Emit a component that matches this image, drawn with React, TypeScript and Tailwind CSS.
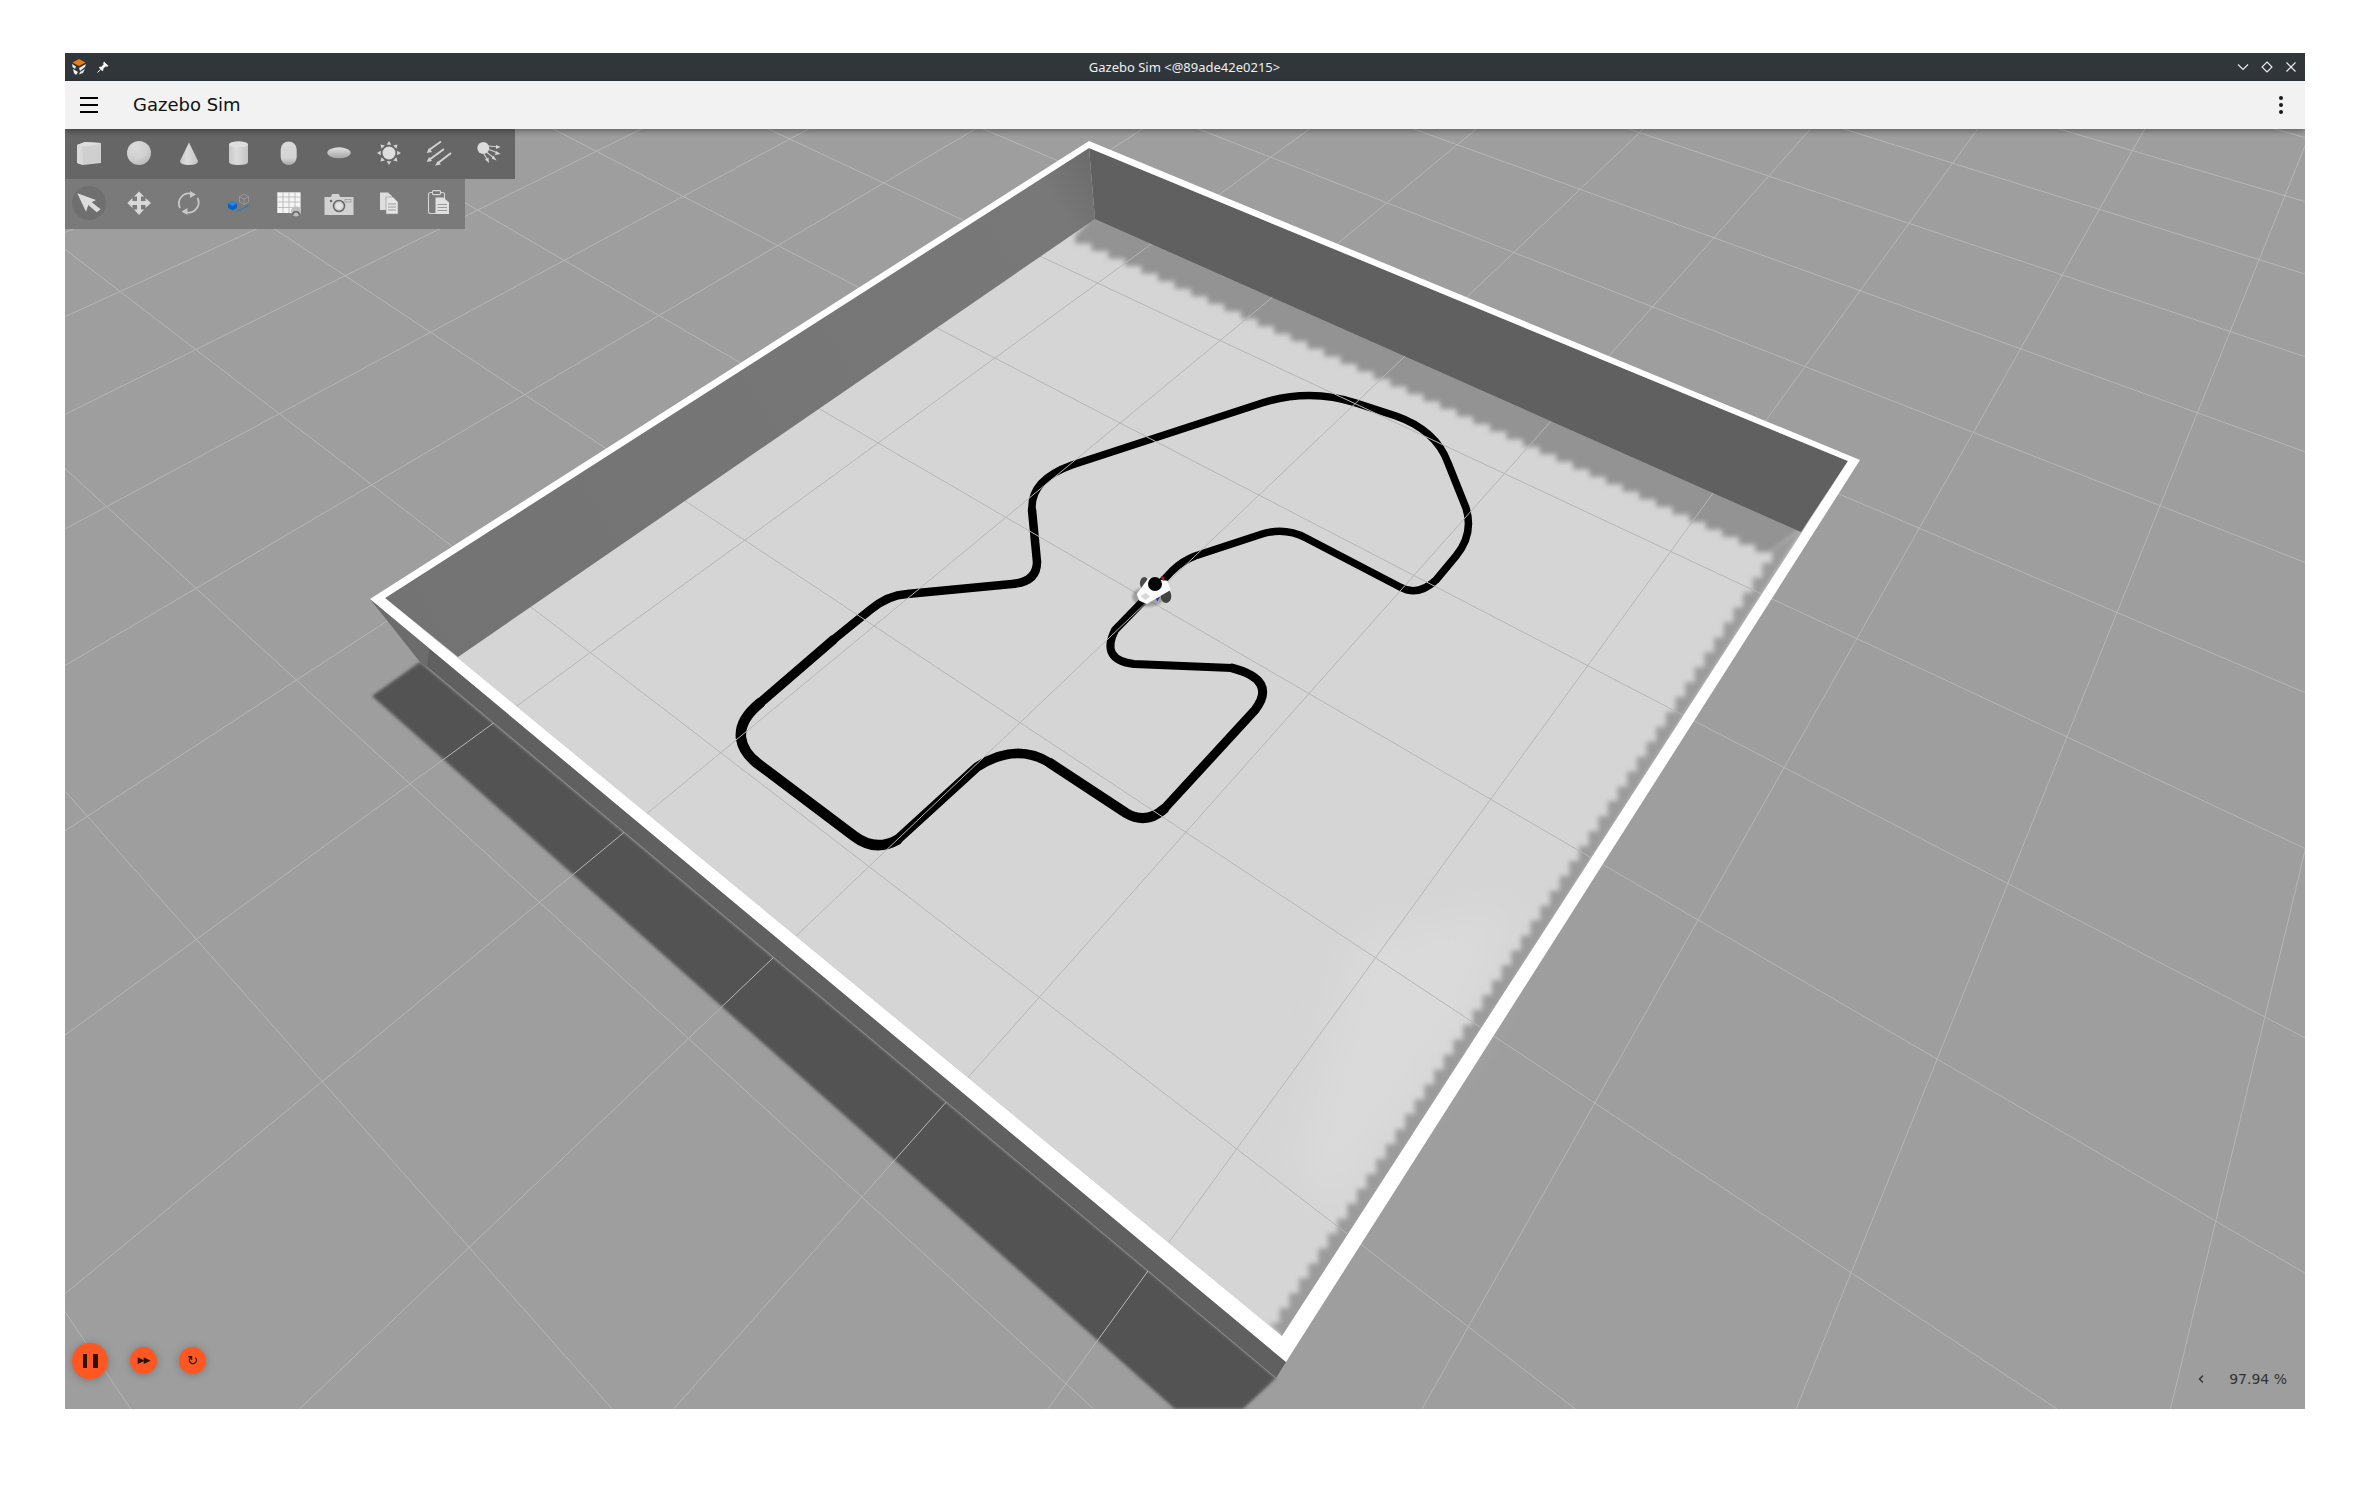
import { ChevronLeft } from "lucide-react"
import type { ReactNode } from "react"

// floor square -> screen, unit square corners taken off the picture
const H = { a: 435.1, b: 1064.2, c: 458, d: 273.7, e: -352.6, f: 657, g: -0.30334, h: 0.39013 }
const project = (u: number, v: number) => {
  const w = H.g * u + H.h * v + 1
  return [(H.a * u + H.b * v + H.c) / w, (H.d * u + H.e * v + H.f) / w]
}

const gridLines: number[][] = []
for (let k = -9; k <= 9; k++) {
  const u = 0.1 + 0.2 * k
  gridLines.push([...project(u, -0.8), ...project(u, 2.6)])
}
for (let k = -4; k <= 13; k++) {
  const v = 0.085 + 0.2 * k
  gridLines.push([...project(-1.7, v), ...project(1.8, v)])
}

// stepped edge of the shadow maps
const stairs = (x0: number, y0: number, x1: number, y1: number, n: number) => {
  const pts: string[] = []
  for (let i = 0; i < n; i++) {
    const ax = x0 + ((x1 - x0) * i) / n
    const ay = y0 + ((y1 - y0) * i) / n
    const bx = x0 + ((x1 - x0) * (i + 1)) / n
    const by = y0 + ((y1 - y0) * (i + 1)) / n
    pts.push(`${ax},${ay}`, `${bx},${ay}`, `${bx},${by}`)
  }
  return pts.join(" ")
}

// the tape gets wider towards the camera, so it is cut in sections
const TRACK = [
  {
    w: 7.5,
    d: "M1152 592 L1172 571 Q1182 561 1195 556 L1262 534 Q1285 527 1306 538 L1400 587 Q1418 597 1436 580 L1456 556 Q1474 534 1466 508 L1448 463 Q1436 430 1396 416 L1356 403 Q1310 388 1262 403 L1072 465 Q1030 480 1032 510",
  },
  { w: 8.5, d: "M1032 510 L1037 562 Q1037 582 1012 584 L907 594 Q888 595 870 610 L833 640" },
  { w: 9.5, d: "M833 640 L760 703" },
  { w: 10.5, d: "M760 703 Q739 720 741 738 Q743 752 757 763 L854 836 Q875 852 897 840" },
  { w: 9.5, d: "M897 840 L977 767 Q1016 742 1050 763" },
  { w: 10, d: "M1050 763 L1126 813 Q1146 825 1164 809" },
  { w: 9, d: "M1164 809 L1255 710 Q1278 680 1232 668" },
  { w: 8, d: "M1232 668 L1134 664 Q1100 660 1115 630 L1152 592" },
]

function Scene() {
  return (
    <svg className="absolute inset-0 w-full h-full" viewBox="65 129 2240 1280">
      <defs>
        <filter id="soft" x="-5%" y="-5%" width="110%" height="110%">
          <feGaussianBlur stdDeviation="1.4" />
        </filter>
        <filter id="softer" x="-5%" y="-5%" width="110%" height="110%">
          <feGaussianBlur stdDeviation="2.4" />
        </filter>
        <filter id="patch" x="-30%" y="-30%" width="160%" height="160%">
          <feGaussianBlur stdDeviation="18" />
        </filter>
        <filter id="robotShadow" x="-50%" y="-50%" width="200%" height="200%">
          <feGaussianBlur stdDeviation="3" />
        </filter>
        <linearGradient id="leftWall" gradientUnits="userSpaceOnUse" x1="1089" y1="148" x2="385" y2="598">
          <stop offset="0" stopColor="#6b6b6b" />
          <stop offset="0.07" stopColor="#787878" />
          <stop offset="1" stopColor="#737373" />
        </linearGradient>
      </defs>
      <rect x="65" y="129" width="2240" height="1280" fill="#9e9e9e" />

      <polygon points="372,696 420,662 1276,1378 1243,1409 1175,1409" fill="#525252" filter="url(#soft)" />
      <polygon points="1089,148 1848,461 1282,1336 385,598" fill="#d5d5d5" />
      <polygon points="1512,907 1474,1013 1330,1209 1300,1164 1360,937" fill="#dadada" filter="url(#patch)" />
      <polygon
        points={`1095,214 1806,526 ${stairs(1772, 552, 1075, 236, 42)}`}
        fill="#939393"
        filter="url(#softer)"
      />
      <polygon
        points={`1806,526 1284,1340 ${stairs(1270, 1323, 1772, 548, 52)}`}
        fill="#9b9b9b"
        filter="url(#softer)"
      />
      {TRACK.map((t) => (
        <path key={t.d} d={t.d} fill="none" stroke="#000" strokeWidth={t.w} strokeLinecap="round" strokeLinejoin="round" />
      ))}

      {gridLines.map((l, i) => (
        <line key={i} x1={l[0]} y1={l[1]} x2={l[2]} y2={l[3]} stroke="#b6b6b6" strokeWidth="1" />
      ))}

      <polygon points="1089,148 1848,461 1801,532 1095,219" fill="#606060" />
      <polygon points="1089,148 385,598 458,657 1095,219" fill="url(#leftWall)" />
      <polygon points="370,599 1286,1362 1276,1378 427,667" fill="#606060" />
      <polygon points="370,599 420,662 427,667 430,640" fill="#6c6c6c" />
      <line x1="427" y1="667" x2="1276" y2="1378" stroke="#8a8a8a" strokeWidth="1" />
      <polygon
        fillRule="evenodd"
        points="1089,141 1860,460 1286,1362 370,599 1089,141 1089,148 385,598 1282,1336 1848,461 1089,148"
        fill="#fff"
      />

      <g transform="translate(1080 540) scale(0.3333)">
        <ellipse cx="205" cy="170" rx="48" ry="30" fill="#000" opacity="0.25" filter="url(#robotShadow)" />
        <ellipse cx="193" cy="130" rx="13" ry="19" fill="#4a4a4a" />
        <ellipse cx="258" cy="168" rx="16" ry="21" fill="#444" />
        <polygon points="170,162 205,115 262,122 272,150 200,192 178,182" fill="#fbfbfb" />
        <polygon points="228,176 240,170 232,184" fill="#2230a0" />
        <circle cx="225" cy="132" r="21" fill="#050505" />
        <polygon points="244,108 254,112 252,122 244,118" fill="#c01818" />
        <polygon points="182,168 198,158 210,170 196,180" fill="#d8d8d8" />
      </g>
    </svg>
  )
}

function Slot({ children, active }: { children: ReactNode; active?: boolean }) {
  return (
    <div className="w-[50px] h-[50px] flex items-center justify-center relative">
      {active && <div className="absolute left-[7px] top-[7px] w-[34px] h-[34px] rounded-full bg-[#6f6f6f]" />}
      <svg viewBox="0 0 30 30" className="w-[30px] h-[30px] relative mr-[2px] mb-[2px]">
        {children}
      </svg>
    </div>
  )
}

function ShapeDefs() {
  return (
    <svg className="absolute w-0 h-0">
      <defs>
        <radialGradient id="ball" cx="0.35" cy="0.25" r="0.85">
          <stop offset="0" stopColor="#dcdcdc" />
          <stop offset="0.6" stopColor="#cfcfcf" />
          <stop offset="1" stopColor="#b5b5b5" />
        </radialGradient>
        <linearGradient id="cyl" x1="0" x2="1" y1="0" y2="0">
          <stop offset="0" stopColor="#c8c8c8" />
          <stop offset="0.4" stopColor="#dcdcdc" />
          <stop offset="1" stopColor="#c4c4c4" />
        </linearGradient>
        <linearGradient id="capsule" x1="0" x2="0" y1="0" y2="1">
          <stop offset="0" stopColor="#dadada" />
          <stop offset="0.7" stopColor="#d4d4d4" />
          <stop offset="1" stopColor="#a8a8a8" />
        </linearGradient>
        <linearGradient id="oval" x1="0" x2="0" y1="0" y2="1">
          <stop offset="0" stopColor="#e2e2e2" />
          <stop offset="1" stopColor="#a4a4a4" />
        </linearGradient>
      </defs>
    </svg>
  )
}

const RAYS = [0, 45, 90, 135, 180, 225, 270, 315]

function ShapesBar() {
  return (
    <div className="absolute left-0 top-0 h-[50px] w-[450px] flex bg-[#666666]">
      <Slot>
        <polygon points="3,7 11,4 27,5 27,25 9,27 3,25" fill="#cfcfcf" />
        <polygon points="3,7 11,4 27,5 20,7.5 8,8.5" fill="#dedede" />
        <polygon points="3,7 8,8.5 9,27 3,25" fill="#d9d9d9" />
      </Slot>
      <Slot>
        <circle cx="15" cy="15" r="12" fill="url(#ball)" />
      </Slot>
      <Slot>
        <path d="M15 4.5 L24 23 Q24 27 15 27 Q6 27 6 23 Z" fill="url(#cyl)" />
      </Slot>
      <Slot>
        <path d="M5 6.5 Q5 3.5 14.5 3.5 Q24 3.5 24 6.5 V24 Q24 27 14.5 27 Q5 27 5 24 Z" fill="url(#cyl)" />
        <ellipse cx="14.5" cy="6.5" rx="9.5" ry="3" fill="#dedede" />
      </Slot>
      <Slot>
        <rect x="6.7" y="3.5" width="16" height="23.5" rx="8" fill="url(#capsule)" />
      </Slot>
      <Slot>
        <ellipse cx="15" cy="14.8" rx="11.7" ry="5.5" fill="url(#oval)" />
      </Slot>
      <Slot>
        <circle cx="15" cy="15" r="6.5" fill="#dedede" />
        {RAYS.map((r) => (
          <polygon key={r} points="15,3 17.3,6.8 12.7,6.8" fill="#d4d4d4" transform={`rotate(${r} 15 15)`} />
        ))}
      </Slot>
      <Slot>
        <g stroke="#d2d2d2" strokeWidth="2" fill="#d2d2d2">
          <line x1="17" y1="3.5" x2="5" y2="12" />
          <line x1="20" y1="11" x2="5" y2="22" />
          <line x1="27" y1="15" x2="14" y2="25" />
        </g>
        <polygon points="2.7,15 8,14 5,10" fill="#d2d2d2" />
        <polygon points="2.7,24 8,23 5,19" fill="#d2d2d2" />
        <polygon points="11,27.5 17,26.5 14,23" fill="#d2d2d2" />
      </Slot>
      <Slot>
        <circle cx="9.3" cy="10" r="6" fill="#dcdcdc" />
        <g stroke="#cfcfcf" strokeWidth="1.2">
          <line x1="15" y1="8" x2="24" y2="9" />
          <line x1="15" y1="11.5" x2="24" y2="15" />
          <line x1="13" y1="14.5" x2="20" y2="20" />
          <line x1="10" y1="16" x2="13.5" y2="22" />
        </g>
        <polygon points="26.7,9 22,7 22,11" fill="#d4d4d4" />
        <polygon points="26.7,16 22,13 21,17" fill="#d4d4d4" />
        <polygon points="22.5,22.5 19.5,17.5 17.5,20.5" fill="#d4d4d4" />
        <polygon points="15,25 14.5,19.5 11,21.5" fill="#d4d4d4" />
      </Slot>
    </div>
  )
}

function ToolsBar() {
  return (
    <div className="absolute left-0 top-[50px] h-[50px] w-[400px] flex bg-[#7a7a7a]">
      <Slot active>
        <path d="M3.3 5.3 L22 12 L17.7 14.3 L26.7 21.3 L22.7 24.3 L14.3 17 L12 23.7 Z" fill="#dcdcdc" />
      </Slot>
      <Slot>
        <path
          d="M15 3.5 L20 8.5 H17 V13 H21.5 V10 L27 15 L21.5 20 V17 H17 V21.5 H20 L15 27 L10 21.5 H13 V17 H8.5 V20 L3.3 15 L8.5 10 V13 H13 V8.5 H10 Z"
          fill="#d8d8d8"
        />
      </Slot>
      <Slot>
        <path d="M6 20 A10 10 0 0 1 18 6" fill="none" stroke="#c8c8c8" strokeWidth="1.8" />
        <path d="M23.5 10 A10 10 0 0 1 11.5 24" fill="none" stroke="#c8c8c8" strokeWidth="1.8" />
        <polygon points="16,3 22,6.5 16,10" fill="#c8c8c8" />
        <polygon points="13.5,20 7.5,23.5 13.5,27" fill="#c8c8c8" />
      </Slot>
      <Slot>
        <path d="M15.5 8.5 L20 6 L24.5 8.5 V14 L20 16.5 L15.5 14 Z M15.5 8.5 L20 11 L24.5 8.5 M20 11 V16.5" fill="none" stroke="#9a9a9a" strokeWidth="0.9" />
        <polygon points="4,15.5 8.5,13 13,15.5 13,20 8.5,22.5 4,20" fill="#0a63c0" />
        <polygon points="4,15.5 8.5,13 13,15.5 8.5,18" fill="#2f86dc" />
        <path d="M12.5 23.5 L25.5 17" stroke="#1c78d8" strokeWidth="1.3" strokeDasharray="2 0.8" fill="none" />
      </Slot>
      <Slot>
        <rect x="3.3" y="4.3" width="23.3" height="20.7" fill="#f4f4f4" />
        <path d="M3.3 9 H26.6 M3.3 14 H26.6 M3.3 19.5 H26.6 M9 4.3 V25 M15 4.3 V25 M21 4.3 V25" stroke="#b4b4b4" strokeWidth="0.8" />
        <circle cx="22" cy="23.5" r="5" fill="#bdbdbd" />
        <path d="M18.7 27 A3.3 3.3 0 0 1 25.3 27" fill="none" stroke="#666" strokeWidth="1.5" />
      </Slot>
      <Slot>
        <path d="M0.5 9 H7 L8 6 H15 L16 9 H29.5 V27 H0.5 Z" fill="#d2d2d2" />
        <circle cx="15" cy="18" r="5.5" fill="#d2d2d2" stroke="#666" strokeWidth="1.5" />
        <circle cx="15" cy="18" r="3" fill="#e4e4e4" />
        <rect x="21" y="11.5" width="6" height="2.5" fill="#d2d2d2" stroke="#888" strokeWidth="0.6" />
        <circle cx="7" cy="13" r="1.2" fill="#666" />
      </Slot>
      <Slot>
        <path d="M6 4.6 H14 L18 8 V22 H6 Z" fill="#dedede" />
        <path d="M12 9 H19 L24 14 V26 H12 Z" fill="#e6e6e6" stroke="#8d8d8d" strokeWidth="0.6" />
        <path d="M14 16 H22 M14 19 H22 M14 22 H22" stroke="#9a9a9a" strokeWidth="1" />
      </Slot>
      <Slot>
        <rect x="4.5" y="4.5" width="16" height="21" rx="2" fill="none" stroke="#d4d4d4" strokeWidth="1.1" />
        <rect x="8.5" y="2.6" width="8" height="4" rx="1" fill="#7a7a7a" stroke="#d4d4d4" strokeWidth="1.1" />
        <path d="M11.5 9.5 H19.5 L25 14.5 V26 H11.5 Z" fill="#e0e0e0" />
        <path d="M13.5 16.5 H23 M13.5 19.5 H23 M13.5 22.5 H23" stroke="#9a9a9a" strokeWidth="1" />
      </Slot>
    </div>
  )
}

function SimControls() {
  return (
    <>
      <div className="absolute left-[7px] top-[1214px] w-[36px] h-[36px] rounded-full bg-[#ff5722] shadow-[0_1px_8px_rgba(0,0,0,0.25)] flex items-center justify-center gap-[6px]">
        <div className="w-[4.5px] h-[14px] bg-[#2a1208]" />
        <div className="w-[4.5px] h-[14px] bg-[#2a1208]" />
      </div>
      <div className="absolute left-[65px] top-[1218px] w-[27px] h-[27px] rounded-full bg-[#ff5722] shadow-[0_1px_8px_rgba(0,0,0,0.25)] flex items-center justify-center">
        <span className="text-[9px] leading-none tracking-[-1px] text-[#2a1208] font-['DejaVu_Sans',sans-serif]">▶▶</span>
      </div>
      <div className="absolute left-[114px] top-[1218px] w-[27px] h-[27px] rounded-full bg-[#ff5722] shadow-[0_1px_8px_rgba(0,0,0,0.25)] flex items-center justify-center">
        <span className="text-[13px] leading-none text-[#2a1208] font-['DejaVu_Sans',sans-serif]">↻</span>
      </div>
    </>
  )
}

export default function App() {
  return (
    <div className="h-screen bg-white pt-[53px] pl-[65px] overflow-hidden">
      <div className="w-[2240px] h-[1356px] flex flex-col overflow-hidden">
        <div className="h-[28px] bg-[#31363b] flex items-center px-[7px]">
          <div className="flex-1 flex items-center gap-[11px]">
            <svg viewBox="0 0 14 16" className="w-[14px] h-[16px]">
              <polygon points="7,0 13.5,3.5 7,7 0.5,3.5" fill="#f07a10" />
              <polygon points="0,5 4,7.5 3,10 0.5,8" fill="#eeeeee" />
              <polygon points="7,9 14,5 13,8 8,12" fill="#e8e8e8" />
              <polygon points="1,10 6,13 4,16 2,14" fill="#f4f4f4" />
              <polygon points="8,13 13,10 11,14 7,15.5" fill="#e0e0e0" />
            </svg>
            <svg viewBox="0 0 12 12" className="w-[12px] h-[12px]">
              <path d="M7 0.5 L11.5 5 L10 5.8 L8.5 5.5 L6.3 7.7 L6.3 9.5 L5.2 10 L2 6.8 L2.6 5.7 L4.4 5.7 L6.5 3.5 L6.2 2 Z" fill="#fcfcfc" />
              <path d="M3.5 8.5 L0.5 11.5" stroke="#fcfcfc" strokeWidth="1" />
            </svg>
          </div>
          <div className="text-[13px] leading-none text-[#eff0f1] font-['Noto_Sans',sans-serif]">Gazebo Sim &lt;@89ade42e0215&gt;</div>
          <div className="flex-1 flex items-center justify-end gap-[12px] pr-[1px]">
            <svg viewBox="0 0 12 12" className="w-[12px] h-[12px]">
              <path d="M1 3.5 L6 8.5 L11 3.5" fill="none" stroke="#eff0f1" strokeWidth="1.1" />
            </svg>
            <svg viewBox="0 0 12 12" className="w-[12px] h-[12px]">
              <path d="M6 1 L11 6 L6 11 L1 6 Z" fill="none" stroke="#eff0f1" strokeWidth="1.1" />
            </svg>
            <svg viewBox="0 0 12 12" className="w-[12px] h-[12px]">
              <path d="M1.5 1.5 L10.5 10.5 M10.5 1.5 L1.5 10.5" fill="none" stroke="#eff0f1" strokeWidth="1.1" />
            </svg>
          </div>
        </div>

        <div className="h-[48px] bg-[#f2f2f2] flex items-center relative z-10 shadow-[0_2px_6px_rgba(0,0,0,0.4)]">
          <div className="w-[18px] ml-[15px] flex flex-col gap-[5px]">
            <div className="h-[2px] bg-black" />
            <div className="h-[2px] bg-black" />
            <div className="h-[2px] bg-black" />
          </div>
          <div className="ml-[35px] -mt-[1px] text-[18px] text-[#111111] font-['DejaVu_Sans',sans-serif]">Gazebo Sim</div>
          <div className="ml-auto mr-[22px] flex flex-col gap-[3px]">
            <div className="w-[4px] h-[4px] rounded-full bg-[#1a1a1a]" />
            <div className="w-[4px] h-[4px] rounded-full bg-[#1a1a1a]" />
            <div className="w-[4px] h-[4px] rounded-full bg-[#1a1a1a]" />
          </div>
        </div>

        <div className="flex-1 relative overflow-hidden">
          <ShapeDefs />
          <Scene />
          <ShapesBar />
          <ToolsBar />
          <SimControls />
          <div className="absolute right-[18px] bottom-[23px] flex items-center text-[14px] leading-none text-[#333333] font-['DejaVu_Sans',sans-serif]">
            <ChevronLeft className="w-[12px] h-[12px] mr-[22px]" strokeWidth={3} />
            <span>97.94 %</span>
          </div>
        </div>
      </div>
    </div>
  )
}
